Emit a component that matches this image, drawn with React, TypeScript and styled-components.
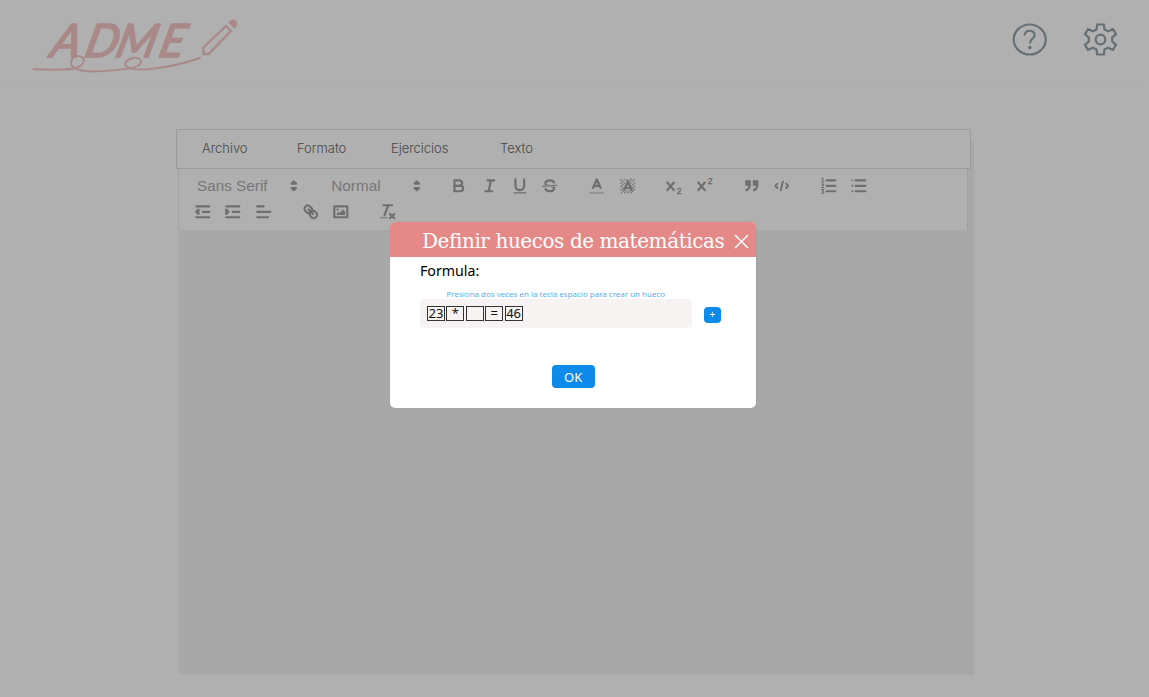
import React from 'react';
import styled, { createGlobalStyle } from 'styled-components';

const GlobalStyle = createGlobalStyle`
  * { box-sizing: border-box; }
  body { margin: 0; background: #b0b0b0; overflow: hidden; }
`;

const Page = styled.div`
  position: relative;
  width: 1149px;
  height: 697px;
  background: #b0b0b0;
  overflow: hidden;
`;

const Header = styled.header`
  display: flex;
  align-items: flex-start;
  justify-content: space-between;
  height: 83px;
  width: 1143px;
  padding: 15px 25px 0 28px;
  border-bottom: 1px solid #adadad;
`;

const Logo = styled.svg`
  display: block;
  width: 214px;
  height: 60px;
  overflow: visible;
`;

const LogoText = styled.text`
  font: italic 400 46px Lato, sans-serif;
  fill: #a98888;
  stroke: #a98888;
  stroke-width: 1.8;
  stroke-linejoin: round;
`;

const HeaderActions = styled.div`
  display: flex;
  gap: 36px;
  padding-top: 7px;
`;

const HeaderIcon = styled.svg`
  display: block;
  width: 35px;
  height: 35px;
  fill: none;
  stroke: #667075;
  stroke-width: 2.2;
`;

const Paper = styled.main`
  width: 795px;
  height: 533px;
  margin: 59px 0 0 179px;
  background: #a8a8a8;
`;

const MenuBar = styled.nav`
  display: flex;
  align-items: center;
  position: relative;
  top: -13px;
  left: -3px;
  width: 795px;
  height: 40px;
  padding: 0 0 2px 25px;
  border: 1px solid #9c9c9c;
  background: #b0b0b0;
`;

const MenuItem = styled.span<{ $width: number }>`
  width: ${p => p.$width}px;
  font: 300 13px Inter, sans-serif;
  letter-spacing: -0.05px;
  color: #484848;
`;

const Toolbar = styled.div`
  display: flex;
  flex-direction: column;
  gap: 6px;
  width: 790px;
  height: 61px;
  margin: -13px 0 0 -1px;
  padding: 7px 0 0 14px;
  border: solid #a0a0a0;
  border-width: 0 1px;
  background: #b0b0b0;
`;

const ToolRow = styled.div`
  display: flex;
  align-items: center;
  height: 20px;
`;

const ToolGroup = styled.div`
  display: flex;
  gap: 10.8px;
  margin-right: 27.2px;
`;

const Picker = styled.div<{ $width: number; $gap: number }>`
  display: flex;
  align-items: center;
  justify-content: space-between;
  width: ${p => p.$width}px;
  margin-right: ${p => p.$gap}px;
  padding-left: 4px;
  font: 400 15.3px/17px 'Liberation Sans', Arial, sans-serif;
  color: #777;
`;

const PickerText = styled.span`
  padding-bottom: 2px;
`;

const ToolSvg = styled.svg`
  display: block;
  width: 19.6px;
  height: 19.6px;
  fill: none;
  stroke: #6f6f6f;
  stroke-width: 2;
  stroke-linecap: round;
  stroke-linejoin: round;

  .fill { fill: #6f6f6f; stroke: none; }
  .both { fill: #6f6f6f; }
  .thin { stroke-width: 1; }
  .label { stroke: #959595; }
  text { font: 400 8px 'Liberation Sans', sans-serif; fill: #6c6c6c; stroke: #6c6c6c; stroke-width: .3; }
`;

const Modal = styled.section`
  position: absolute;
  left: 390px;
  top: 222px;
  width: 366.4px;
  height: 186px;
  border-radius: 5px;
  overflow: hidden;
  background: #fff;
  box-shadow: 0 0 1px #888;
  font-family: 'Noto Sans', sans-serif;
`;

const ModalHeader = styled.div`
  display: flex;
  align-items: center;
  justify-content: space-between;
  height: 35px;
  padding: 2px 7px 0 32px;
  background: #e48987;
`;

const ModalTitle = styled.h1`
  margin: 0;
  font: 400 20px/24px 'DejaVu Serif', serif;
  letter-spacing: -0.43px;
  white-space: nowrap;
  color: #fff;
`;

const CloseIcon = styled.svg`
  flex: none;
  width: 15px;
  height: 15px;
  margin-top: 1px;
  fill: none;
  stroke: #fff;
  stroke-width: 1.5;
`;

const ModalBody = styled.div`
  display: flex;
  flex-direction: column;
  padding: 4px 30px 0;
`;

const Label = styled.label`
  height: 20px;
  font-size: 14.2px;
  line-height: 20px;
  color: #000;
`;

const Hint = styled.p`
  height: 10px;
  margin: 8px 0 0 26.5px;
  font-size: 7.97px;
  line-height: 10px;
  white-space: nowrap;
  color: #5caeec;
`;

const FormulaRow = styled.div`
  display: flex;
  align-items: center;
  gap: 12px;
`;

const FormulaField = styled.div`
  display: flex;
  align-items: center;
  gap: 1.4px;
  width: 271.5px;
  height: 29px;
  padding: 0 7px;
  border-radius: 5px;
  background: #f7f3f3;
`;

const Token = styled.span`
  width: 18px;
  height: 15px;
  margin-bottom: 1px;
  border: 1px solid #333;
  font-size: 13px;
  line-height: 12px;
  text-align: center;
  color: #111;
`;

const AddButton = styled.button`
  width: 17.5px;
  height: 16px;
  margin-top: 2px;
  padding: 0;
  border: 0;
  border-radius: 4px;
  background: #0d8bea;
  color: #fff;
  font: 10px/15px 'Noto Sans', sans-serif;
`;

const OkButton = styled.button`
  align-self: center;
  width: 43px;
  height: 23px;
  margin-top: 37px;
  padding: 1px 0 0;
  border: 0;
  border-radius: 4px;
  background: #0d8bea;
  color: #fff;
  font: 13px/23px 'Noto Sans', sans-serif;
`;

const icons: Record<string, React.ReactNode> = {
  picker: <><path className="both" d="M7 11L9 13L11 11Z" /><path className="both" d="M7 7L9 5L11 7Z" /></>,
  bold: <><path d="M5 4H9.5A2.5 2.5 0 0 1 9.5 9H5Z" /><path d="M5 9H10.5A2.5 2.5 0 0 1 10.5 14H5Z" /></>,
  italic: <path d="M7 4H13M5 14H11M8 14L10 4" />,
  underline: <><path d="M5 3V9A4 4 0 0 0 13 9V3" /><rect className="fill" x="3" y="15" width="12" height="1" rx=".5" /></>,
  strike: <><path className="thin" d="M15.5 8.5L2.5 9.5" /><path className="fill" d="M9.007,8C6.542,7.791,6,7.519,6,6.5,6,5.792,7.283,5,9,5c1.571,0,2.765.679,2.969,1.309a1,1,0,0,0,1.9-.617C13.356,4.106,11.354,3,9,3,6.2,3,4,4.538,4,6.5a3.2,3.2,0,0,0,.5,1.843Z" /><path className="fill" d="M8.984,10C11.457,10.208,12,10.479,12,11.5c0,.708-1.283,1.5-3,1.5-1.571,0-2.765-.679-2.969-1.309a1,1,0,1,0-1.9.617C4.644,13.894,6.646,15,9,15c2.8,0,5-1.538,5-3.5a3.2,3.2,0,0,0-.5-1.843Z" /></>,
  color: <><path className="label" d="M3 15.5H15" /><path d="M5.5 11L9 3L12.5 11M11.63 9H6.38" /></>,
  background: <><path className="thin" strokeDasharray="1 1.2" d="M2.5 4L4 2.5M2.5 7L7 2.5M2.5 10L6 6.5M2.5 13L5 10.5M3 15.5L5 13.5M6 15.5L8 13.5M9 15.5L11 13.5M12 15.5L15.5 12M13 11.5L15.5 9M12 9.5L15.5 6M11 7L15.5 2.5M10 5L12.5 2.5M8 4L9.5 2.5" /><path d="M5.5 13L9 5L12.5 13M11.63 11H6.38" /></>,
  sub: <><path d="M3 6L9 13M9 6L3 13" /><text x="11.7" y="16.5">2</text></>,
  sup: <><path d="M3 6L9 13M9 6L3 13" /><text x="11.7" y="7.5">2</text></>,
  quote: <><path className="both" strokeWidth="1" d="M4 5H7V8H4ZM11 5H14V8H11Z" /><path d="M7 8C7 12.03 4 13 4 13M14 8C14 12.03 11 13 11 13" /><path className="fill" d="M3 4H8V9H3ZM10 4H15V9H10Z" /></>,
  code: <path strokeWidth="1.7" d="M5 7L3 9L5 11M13 7L15 9L13 11M10 5L8 13" />,
  ordered: <><path d="M7 4H15M7 9H15M7 14H15" /><path className="thin" d="M2.5 2.7L3.5 2V5.5M2.5 5.5H4.5M2.5 7.5H4.2V8.5L2.5 10.5H4.5M2.5 12.5H4.3L3.4 14L4.4 15L3.5 16H2.5" /></>,
  bullet: <><path d="M6 4H15M6 9H15M6 14H15" /><path strokeWidth="1.7" d="M3 4H3.01M3 9H3.01M3 14H3.01" /></>,
  outdent: <><path d="M3 4H15M3 14H15M9 9H15" /><path className="both" d="M5 7V11L3 9Z" /></>,
  indent: <><path d="M3 4H15M3 14H15M9 9H15" /><path className="both" d="M3 7V11L5 9Z" /></>,
  align: <path d="M3 4H9M3 9H15M3 14H13" />,
  link: <><path d="M7 7L11 11" /><path d="M8.9,4.577a3.476,3.476,0,0,1,.36,4.679A3.476,3.476,0,0,1,4.577,8.9C3.185,7.5,2.035,6.4,4.217,4.217S7.5,3.185,8.9,4.577Z" /><path d="M13.423,9.1a3.476,3.476,0,0,0-4.679-.36,3.476,3.476,0,0,0,.36,4.679c1.392,1.392,2.5,2.542,4.679.36S14.815,10.5,13.423,9.1Z" /></>,
  image: <><rect x="3" y="4" width="12" height="10" /><circle className="fill" cx="6" cy="7" r="1" /><path className="fill" d="M5 12V11L7 9L8 10L11 7L13 9V12Z" /></>,
  clean: <><path d="M5 3H13M6 12L9.35 3M11 11L15 15M15 11L11 15" /><rect className="fill" x="2" y="14" width="7" height="1" rx=".5" /></>,
};

const Tool = ({ name }: { name: string }) => <ToolSvg viewBox="0 0 18 18">{icons[name]}</ToolSvg>;

const Tools = ({ names }: { names: string[] }) => (
  <ToolGroup>{names.map(n => <Tool key={n} name={n} />)}</ToolGroup>
);

const menu: [string, number][] = [['Archivo', 95], ['Formato', 94], ['Ejercicios', 109], ['Texto', 60]];
const tokens = ['23', '*', '', '=', '46'];

export default function App() {
  return (
    <Page>
      <GlobalStyle />
      <Header>
        <Logo viewBox="28 15 214 60">
          <LogoText transform="translate(49 56.5) skewX(-14)" x="0 34 65 108">ADME</LogoText>
          <g fill="none" stroke="#a98888" strokeLinecap="round" strokeLinejoin="round">
            <path strokeWidth="1.9" d="M33.5 69.3C48 69 67 71.5 77 67.5C85 64.5 86 57.5 79 56C72 55 69 63 73 67C80 74 107 71 122 69.5C135 68.5 143 65 140.5 60C137 55 126 59 125 64C127 74 168 69 200 58" />
            <path strokeWidth="2.3" strokeLinejoin="miter" d="M203.5 54V47.5L226 26L231 31L208.5 54Z" />
            <path d="M229 22.5L232 20Q234 19 236 21.5Q238 24 236.5 25.5L234.5 27.8Z" fill="#a98888" strokeWidth="1" />
          </g>
        </Logo>
        <HeaderActions>
          <HeaderIcon viewBox="0 0 35 35">
            <ellipse cx="17.7" cy="17.5" rx="16" ry="15" />
            <path d="M12.7 13.5C12.7 7 22.7 7.5 22.7 13C22.7 17 17.9 16.5 17.9 21.5" />
            <circle cx="17.9" cy="25.5" r="1.8" fill="#667075" stroke="none" />
          </HeaderIcon>
          <HeaderIcon viewBox="0 0 35 35">
            <path d="M14.2 2.5H20.8L21.5 7.5L25 9.2L30 7.2L33 12.2L29.2 15.5V19.5L33 22.8L30 27.8L25 25.8L21.5 27.5L20.8 32.5H14.2L13.5 27.5L10 25.8L5 27.8L2 22.8L5.8 19.5V15.5L2 12.2L5 7.2L10 9.2L13.5 7.5Z" />
            <circle cx="17.5" cy="17.5" r="4.8" />
          </HeaderIcon>
        </HeaderActions>
      </Header>
      <Paper>
        <MenuBar>{menu.map(([t, w]) => <MenuItem key={t} $width={w}>{t}</MenuItem>)}</MenuBar>
        <Toolbar>
          <ToolRow>
            <Picker $width={111} $gap={23.3}><PickerText>Sans Serif</PickerText><Tool name="picker" /></Picker>
            <Picker $width={99} $gap={23}><PickerText>Normal</PickerText><Tool name="picker" /></Picker>
            <Tools names={['bold', 'italic', 'underline', 'strike']} />
            <Tools names={['color', 'background']} />
            <Tools names={['sub', 'sup']} />
            <Tools names={['quote', 'code']} />
            <Tools names={['ordered', 'bullet']} />
          </ToolRow>
          <ToolRow>
            <Tools names={['outdent', 'indent', 'align']} />
            <Tools names={['link', 'image']} />
            <Tools names={['clean']} />
          </ToolRow>
        </Toolbar>
      </Paper>
      <Modal>
        <ModalHeader>
          <ModalTitle>Definir huecos de matemáticas</ModalTitle>
          <CloseIcon viewBox="0 0 15 15"><path d="M1 1L14 14M14 1L1 14" /></CloseIcon>
        </ModalHeader>
        <ModalBody>
          <Label>Formula:</Label>
          <Hint>Presiona dos veces en la tecla espacio para crear un hueco</Hint>
          <FormulaRow>
            <FormulaField>{tokens.map((t, i) => <Token key={i}>{t}</Token>)}</FormulaField>
            <AddButton>+</AddButton>
          </FormulaRow>
          <OkButton>OK</OkButton>
        </ModalBody>
      </Modal>
    </Page>
  );
}
